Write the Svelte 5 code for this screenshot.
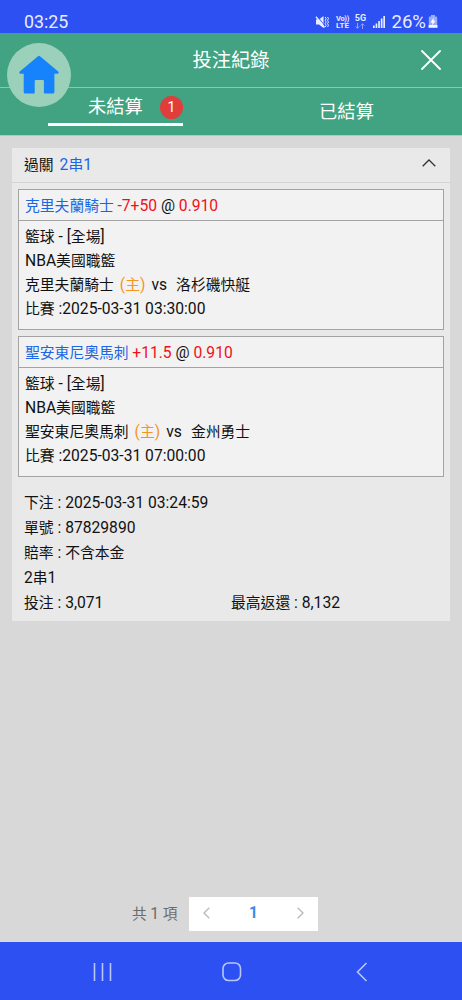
<script lang="ts">
    let activeTab = $state('open');
    let expanded = $state(true);

    const legs = [
        {
            pick: '克里夫蘭騎士',
            handicap: '-7+50',
            odds: '0.910',
            sport: '籃球 - [全場]',
            league: 'NBA美國職籃',
            home: '克里夫蘭騎士',
            away: '洛杉磯快艇',
            time: '2025-03-31 03:30:00'
        },
        {
            pick: '聖安東尼奧馬刺',
            handicap: '+11.5',
            odds: '0.910',
            sport: '籃球 - [全場]',
            league: 'NBA美國職籃',
            home: '聖安東尼奧馬刺',
            away: '金州勇士',
            time: '2025-03-31 07:00:00'
        }
    ];
</script>

<div class="screen">
    <div class="status">
        <span class="clock">03:25</span>
        <div class="status-icons">
            <svg class="mute" width="14" height="14" viewBox="0 0 14 14">
                <path d="M1 4.5h3L8.5 1v12L4 9.5H1z" fill="#e8ecff" />
                <path d="M2.200 1.200l8 10" stroke="#2c50f2" stroke-width=".9" />
                <path d="M1 1.800l8.500 10.700" stroke="#e8ecff" stroke-width="1.400" />
                <path d="M10.2 2l1 1.6-1 1.7 1 1.7-1 1.7 1 1.6-1 1.7M12.5 2l1 1.6-1 1.7 1 1.7-1 1.7 1 1.6-1 1.7" fill="none" stroke="#e8ecff" />
            </svg>
            <div class="stack volte"><span class="vo">Vo))</span><span>LTE</span></div>
            <div class="stack fiveg">
                <span>5G</span>
                <svg width="10" height="6" viewBox="0 0 10 6" fill="none" stroke="#a9b8fb" stroke-width=".8">
                    <path d="M2.5 0v5.2M.7 3.4l1.8 1.9 1.8-1.9M7.5 6V.8M5.7 2.6L7.5.7l1.8 1.9" />
                </svg>
            </div>
            <svg class="signal" width="12" height="12" viewBox="0 0 12 12" fill="#e8ecff">
                <path d="M0 9.5h1.7V12H0zM2.6 7.5h1.7V12H2.6zM5.2 5h1.7v7H5.2zM7.8 2.5h1.7V12H7.8zM10.3 0H12v12h-1.7z" />
            </svg>
            <span class="percent">26%</span>
            <svg class="battery" width="10" height="14" viewBox="0 0 10 14">
                <path d="M3 0h4v1.5h1.2q1 0 1 1V10H.8V2.5q0-1 1-1H3z" fill="#9aacf9" />
                <path d="M.5 10h9v2.8h-9z" fill="#f2f4ff" />
                <path d="M5.8 2.5L2.5 7.4h2L4 10.5l3.5-4.8h-2z" fill="#fff" />
            </svg>
        </div>
    </div>

    <header>
        <button class="home" aria-label="home">
            <svg width="40" height="40" viewBox="0 0 40 40">
                <path d="M19 1.2q1-.8 2 0l18.2 15.3q.9.8.2 1.7-.3.5-1 .5h-3V37q0 1.5-1.5 1.5h-8.2q-.8 0-.8-.8V26q0-1-1-1h-7.200q-1 0-1 1v11.700q0 .8-.8.8H6.200q-1.500 0-1.500-1.500V18.700H1.600q-.7 0-1-.5-.7-.9.200-1.700z" fill="#1682fb" />
            </svg>
        </button>
        <h1>投注紀錄</h1>
        <button class="close" aria-label="close">
            <svg width="20" height="20" viewBox="0 0 20 20" stroke="#fff" stroke-width="1.8" stroke-linecap="round">
                <path d="M1 1l18 18M19 1L1 19" />
            </svg>
        </button>
    </header>

    <nav class="tabs">
        <button class:active={activeTab === 'open'} onclick={() => (activeTab = 'open')}>
            <span>未結算</span><span class="badge">1</span>
        </button>
        <button class:active={activeTab === 'settled'} onclick={() => (activeTab = 'settled')}>
            <span>已結算</span>
        </button>
    </nav>

    <!-- latin runs are set slightly larger than the chinese text around them -->
    {#snippet mixed(text: string)}
        {#each text.split(/([\x20-\x7e]+)/) as run, i}{#if i % 2}<span class="latin">{run}</span>{:else}{run}{/if}{/each}
    {/snippet}

    <main>
        <section class="card">
            <button class="card-head" onclick={() => (expanded = !expanded)}>
                <span>過關</span>
                <span class="blue">{@render mixed('2串1')}</span>
                <svg class="arrow" class:closed={!expanded} width="14" height="8" viewBox="0 0 14 8" fill="none" stroke="#333" stroke-width="1.3">
                    <path d="M.7 7.300L7 1l6.300 6.300" />
                </svg>
            </button>

            {#if expanded}
                <div class="legs">
                    {#each legs as leg}
                        <article>
                            <div class="pick">
                                <span class="blue">{leg.pick}</span>
                                <span class="latin"><span class="red">{leg.handicap}</span> @ <span class="red">{leg.odds}</span></span>
                            </div>
                            <div class="info">
                                <p>{@render mixed(leg.sport)}</p>
                                <p>{@render mixed(leg.league)}</p>
                                <p class="match">
                                    <span>{leg.home}</span>
                                    <span class="host">{@render mixed('(主)')}</span>
                                    <span class="vs latin">vs</span>
                                    <span>{leg.away}</span>
                                </p>
                                <p>{@render mixed('比賽 :' + leg.time)}</p>
                            </div>
                        </article>
                    {/each}
                </div>

                <div class="summary">
                    <p>{@render mixed('下注 : 2025-03-31 03:24:59')}</p>
                    <p>{@render mixed('單號 : 87829890')}</p>
                    <p>{@render mixed('賠率 : 不含本金')}</p>
                    <p>{@render mixed('2串1')}</p>
                    <p class="amounts">
                        <span>{@render mixed('投注 : 3,071')}</span>
                        <span>{@render mixed('最高返還 : 8,132')}</span>
                    </p>
                </div>
            {/if}
        </section>

        <div class="pagination">
            <span class="total">共 <span class="latin">1</span> 項</span>
            <div class="pager">
                <svg width="7" height="12" viewBox="0 0 7 12"><path d="M6.300.7L1 6l5.300 5.300" /></svg>
                <b>1</b>
                <svg width="7" height="12" viewBox="0 0 7 12"><path d="M.7.7L6 6 .7 11.300" /></svg>
            </div>
        </div>
    </main>

    <footer>
        <svg width="19" height="20" viewBox="0 0 19 20"><path d="M1.500 1v18M9.500 1v18M17.500 1v18" /></svg>
        <svg width="20" height="20" viewBox="0 0 20 20"><rect x="1" y="1" width="17.500" height="17.500" rx="5.500" /></svg>
        <svg width="12" height="20" viewBox="0 0 12 20"><path d="M10.500 1L1.500 10l9 9" /></svg>
    </footer>
</div>

<style>
    :global(body) {
        margin: 0;
    }

    .screen {
        display: flex;
        flex-direction: column;
        width: 462px;
        height: 1000px;
        overflow: hidden;
        background: #d8d8d8;
        color: #111;
        font-family: Roboto, "Noto Sans CJK TC", sans-serif;
        font-size: 14.8px;
    }

    button {
        padding: 0;
        border: 0;
        background: none;
        color: inherit;
        font: inherit;
        cursor: pointer;
    }

    h1, p {
        margin: 0;
        font-weight: 400;
    }

    .latin {
        font-size: 15.65px;
    }

    .status {
        display: flex;
        align-items: center;
        justify-content: space-between;
        box-sizing: border-box;
        height: 33px;
        padding: 11px 24px 0 24px;
        background: #2c50f2;
        color: #e8ecff;
    }

    .clock {
        font-size: 17.8px;
        line-height: 22px;
    }

    .status-icons {
        display: flex;
        align-items: center;
    }

    .stack {
        display: flex;
        flex-direction: column;
        align-items: center;
        height: 14px;
        font-size: 8px;
        font-weight: 700;
        line-height: 7px;
    }

    .volte {
        width: 14px;
        margin-left: 6px;
        white-space: nowrap;
    }

    .vo {
        font-size: 7.5px;
        letter-spacing: -.3px;
    }

    .fiveg {
        width: 12px;
        margin-left: 5px;
    }

    .fiveg span {
        font-size: 9px;
    }

    .fiveg svg {
        margin-top: 1px;
    }

    .signal {
        margin-left: 7px;
    }

    .percent {
        margin: 0 2px 0 6px;
        font-size: 18.6px;
        line-height: 22px;
    }

    header {
        position: relative;
        display: flex;
        align-items: center;
        justify-content: center;
        box-sizing: border-box;
        height: 55px;
        border-bottom: 1px solid #8cc8ae;
        background: #41a381;
        color: #fff;
    }

    h1 {
        padding-top: 1px;
        font-size: 19.3px;
        line-height: 28px;
    }

    /* floats over the header and the tab bar */
    .home {
        position: absolute;
        top: 10px;
        left: 7px;
        z-index: 1;
        display: flex;
        align-items: center;
        justify-content: center;
        width: 64px;
        height: 64px;
        border-radius: 50%;
        background: #9bd0bb;
    }

    .close {
        position: absolute;
        top: 17px;
        right: 21px;
        height: 20px;
        line-height: 0;
    }

    .tabs {
        display: flex;
        height: 47px;
        border-bottom: 1px solid #a6cdbd;
        background: #41a381;
        color: #fff;
        font-size: 18.3px;
    }

    .tabs button {
        display: flex;
        flex: 1;
        align-items: center;
        justify-content: center;
        line-height: 24px;
    }

    .tabs button.active {
        flex: none;
        gap: 17px;
        box-sizing: border-box;
        width: 135px;
        height: 38px;
        margin: 0 48px;
        padding: 3px 0 0 40px;
        justify-content: flex-start;
        border-bottom: 3px solid #fff;
    }

    .badge {
        width: 23px;
        height: 23px;
        border-radius: 50%;
        background: #e03d3b;
        font-size: 14px;
        line-height: 23px;
        text-align: center;
    }

    main {
        display: flex;
        flex: 1;
        flex-direction: column;
        justify-content: space-between;
        padding: 12px 12px 11px;
    }

    .card {
        background: #e9e9e9;
    }

    .card-head {
        display: flex;
        align-items: center;
        gap: 6px;
        box-sizing: border-box;
        width: 100%;
        height: 35px;
        padding: 0 14px 3px 12px;
        border-bottom: 1px solid #d4d4d4;
    }

    .arrow {
        margin: -2px 0 0 auto;
    }

    .arrow.closed {
        transform: rotate(180deg);
    }

    .legs {
        display: flex;
        flex-direction: column;
        gap: 6px;
        padding: 6px 6px 0;
    }

    article {
        border: 1px solid #a3a3a3;
        background: #f2f2f2;
    }

    .pick {
        height: 30px;
        padding: 0 6px;
        border-bottom: 1px solid #a3a3a3;
        line-height: 31px;
    }

    .info {
        padding: 4px 6px 8px;
        line-height: 24px;
    }

    .info p {
        height: 24px;
    }

    .match {
        display: flex;
    }

    .blue {
        color: #1a66e5;
    }

    .red {
        color: #f01018;
    }

    .host {
        margin: 0 6px;
        color: #f7941d;
    }

    .vs {
        margin-right: 9px;
    }

    .summary {
        padding: 12.6px 12px 5.4px;
        line-height: 25.2px;
    }

    .summary p {
        height: 25.2px;
    }

    .amounts {
        display: flex;
    }

    .amounts span {
        white-space: pre;
    }

    .amounts > span {
        flex: 1;
    }

    .pagination {
        display: flex;
        align-items: center;
        gap: 11px;
        padding-left: 120px;
        color: #6b6b6b;
        font-size: 14.7px;
    }

    .total {
        width: 46px;
        margin-top: -3px;
        white-space: nowrap;
    }

    .pager {
        display: flex;
        align-items: center;
        justify-content: space-between;
        box-sizing: border-box;
        width: 129px;
        height: 34px;
        padding: 0 14px 2px;
        background: #fff;
        color: #3a8ee6;
    }

    .pager b {
        font-size: 15.6px;
    }

    .pager path {
        fill: none;
        stroke: #b9bcc2;
        stroke-width: 1.4;
    }

    footer {
        display: flex;
        align-items: center;
        gap: 110px;
        box-sizing: border-box;
        height: 58px;
        padding: 2px 0 0 93px;
        background: #2c50f2;
    }

    footer svg:last-child {
        margin-left: 4px;
    }

    footer path, footer rect {
        fill: none;
        stroke: #b9c7fb;
        stroke-width: 1.6;
    }
</style>
